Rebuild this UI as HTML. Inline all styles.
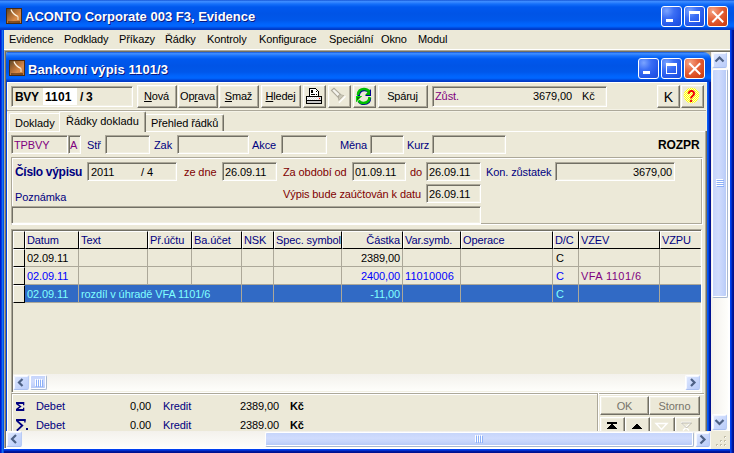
<!DOCTYPE html>
<html><head><meta charset="utf-8">
<style>
*{margin:0;padding:0;box-sizing:border-box}
html,body{width:734px;height:453px;overflow:hidden;background:#ECE9D8}
body{position:relative;font-family:"Liberation Sans",sans-serif;font-size:11px;color:#000}
.a{position:absolute}
.t{position:absolute;white-space:nowrap;line-height:13px}
.tb{position:absolute;background:linear-gradient(to bottom,#0842C8 0px,#3D8DFF 1px,#3A89FF 2px,#1570FA 4px,#0058EE 7px,#0054E6 14px,#0057EA 20px,#0064FC 24px,#0066FF 26px,#005CF4 27px,#0046D8 28px,#0036C0 30px)}
.ttl{color:#fff;font-weight:bold;font-size:13px;text-shadow:1px 1px 0 #0A1A80;letter-spacing:0}
.wb{position:absolute;width:21px;height:21px;border:1px solid #fff;border-radius:3px;background:radial-gradient(circle at 25% 20%,#7BA4FF 0%,#3C6FF5 35%,#2458EA 70%,#1A4BD8 100%)}
.wbc{background:radial-gradient(circle at 25% 20%,#F4A586 0%,#E6663E 40%,#D8481C 75%,#C23A12 100%)}
.sk{position:absolute;border-top:1px solid #ACA899;border-left:1px solid #ACA899;border-right:1px solid #fff;border-bottom:1px solid #fff;box-shadow:inset 1px 1px 0 #716F64, inset -1px -1px 0 #F1EFE2}
.bt{position:absolute;background:#ECE9D8;border-top:1px solid #fff;border-left:1px solid #fff;border-right:1px solid #716F64;border-bottom:1px solid #716F64;box-shadow:inset -1px -1px 0 #ACA899, inset 1px 1px 0 #F1EFE2}
.sbb{position:absolute;border:1px solid #fff;border-right-color:#B8CBF5;border-bottom-color:#A9BFF0;border-radius:2px;background:linear-gradient(135deg,#E2EAFE 0%,#CCDAFC 45%,#B9CCF9 100%);box-shadow:inset 1px 1px 0 #F4F7FF}
.thv{position:absolute;border:1px solid #fff;border-right-color:#A8B8D0;border-bottom-color:#A8B8D0;box-shadow:inset -1px -1px 0 #fff;border-radius:2px;background:linear-gradient(to right,#C6D5FB 0%,#D0DCFD 40%,#C4D4FB 70%,#B6C9F6 100%)}
.thh{position:absolute;border:1px solid #fff;border-right-color:#A8B8D0;border-bottom-color:#A8B8D0;box-shadow:inset -1px -1px 0 #fff;border-radius:2px;background:linear-gradient(to bottom,#C6D5FB 0%,#D0DCFD 40%,#C4D4FB 70%,#B2C6F5 100%)}
</style></head><body>
<svg width="0" height="0" style="position:absolute"><defs>
<linearGradient id="ig" x1="0" y1="0" x2="1" y2="1"><stop offset="0" stop-color="#5E4A2A"/><stop offset="0.35" stop-color="#A86A34"/><stop offset="0.65" stop-color="#D88A48"/><stop offset="1" stop-color="#C07838"/></linearGradient>
</defs></svg>

<div class="tb" style="left:0;top:0;width:734px;height:30px"></div>
<svg class="a" style="left:6px;top:8px" width="16" height="16">
<rect x="0" y="0" width="16" height="16" fill="#4A2A10"/>
<rect x="1" y="1" width="14" height="14" fill="url(#ig)"/>
<path d="M5 1.5 Q6.5 6 12 8.5" stroke="#FFF4E0" stroke-width="1.3" fill="none"/>
<path d="M12 8.5 L12 12" stroke="#F0E0C0" stroke-width="1.2"/>
<path d="M2 14 L14 14" stroke="#3A2008" stroke-width="1.5" opacity="0.7"/>
</svg>
<div class="t ttl" style="left:25px;top:10px">ACONTO Corporate 003 F3, Evidence</div>
<div class="wb" style="left:661px;top:6px"></div>
<div class="a" style="left:666px;top:19px;width:7px;height:3px;background:#fff;"></div>
<div class="wb" style="left:684px;top:6px"></div>
<div class="a" style="left:689px;top:11px;width:11px;height:11px;border:1px solid #fff;border-top-width:3px"></div>
<div class="wb wbc" style="left:707px;top:6px"></div>
<svg class="a" style="left:707px;top:6px" width="21" height="21"><path d="M6 6L15.5 15.5M15.5 6L6 15.5" stroke="#fff" stroke-width="2" stroke-linecap="square"/></svg>
<div class="a" style="left:0px;top:30px;width:4px;height:423px;background:linear-gradient(to right,#0018D0 0px,#0018D0 1px,#0040E0 1px,#0040E0 2px,#1A70F0 2px,#1A70F0 3px,#0050E8 3px);"></div>
<div class="a" style="left:730px;top:30px;width:4px;height:423px;background:linear-gradient(to right,#0040F0 0px,#0040F0 1px,#0030D0 1px,#0030D0 2px,#0018A0 2px,#0018A0 3px,#001090 3px);"></div>
<div class="a" style="left:4px;top:449px;width:726px;height:4px;background:linear-gradient(to bottom,#0040F0 0px,#0040F0 1px,#0030D0 1px,#0030D0 2px,#0018A0 2px,#0018A0 3px,#001090 3px);"></div>
<div class="t " style="left:9px;top:33px;color:#000;font-size:11px;letter-spacing:-0.1px">Evidence</div>
<div class="t " style="left:64px;top:33px;color:#000;font-size:11px;letter-spacing:-0.1px">Podklady</div>
<div class="t " style="left:119px;top:33px;color:#000;font-size:11px;letter-spacing:-0.1px">Příkazy</div>
<div class="t " style="left:165px;top:33px;color:#000;font-size:11px;letter-spacing:-0.1px">Řádky</div>
<div class="t " style="left:207px;top:33px;color:#000;font-size:11px;letter-spacing:-0.1px">Kontroly</div>
<div class="t " style="left:259px;top:33px;color:#000;font-size:11px;letter-spacing:-0.1px">Konfigurace</div>
<div class="t " style="left:329px;top:33px;color:#000;font-size:11px;letter-spacing:-0.1px">Speciální</div>
<div class="t " style="left:381px;top:33px;color:#000;font-size:11px;letter-spacing:-0.1px">Okno</div>
<div class="t " style="left:418px;top:33px;color:#000;font-size:11px;letter-spacing:-0.1px">Modul</div>
<div class="a" style="left:4px;top:49px;width:726px;height:1px;background:#fff;"></div>
<div class="a" style="left:4px;top:50px;width:726px;height:399px;background:#ACA899;"></div>
<div class="a" style="left:5px;top:51px;width:725px;height:398px;background:#716F64;"></div>
<div class="a" style="left:6px;top:52px;width:724px;height:397px;background:#ACA899;"></div>
<div class="tb" style="left:6px;top:52px;width:705px;height:30px;border-top-right-radius:8px 7px;border-top-left-radius:2px"></div>
<svg class="a" style="left:9px;top:60px" width="16" height="16">
<rect x="0" y="0" width="16" height="16" fill="#4A2A10"/>
<rect x="1" y="1" width="14" height="14" fill="url(#ig)"/>
<path d="M5 1.5 Q6.5 6 12 8.5" stroke="#FFF4E0" stroke-width="1.3" fill="none"/>
<path d="M12 8.5 L12 12" stroke="#F0E0C0" stroke-width="1.2"/>
<path d="M2 14 L14 14" stroke="#3A2008" stroke-width="1.5" opacity="0.7"/>
</svg>
<div class="t ttl" style="left:28px;top:63px;letter-spacing:0.1px">Bankovní výpis 1101/3</div>
<div class="wb" style="left:638px;top:58px"></div>
<div class="a" style="left:643px;top:71px;width:7px;height:3px;background:#fff;"></div>
<div class="wb" style="left:661px;top:58px"></div>
<div class="a" style="left:666px;top:63px;width:11px;height:11px;border:1px solid #fff;border-top-width:3px"></div>
<div class="wb wbc" style="left:684px;top:58px"></div>
<svg class="a" style="left:684px;top:58px" width="21" height="21"><path d="M6 6L15.5 15.5M15.5 6L6 15.5" stroke="#fff" stroke-width="2" stroke-linecap="square"/></svg>
<div class="a" style="left:6px;top:82px;width:1px;height:349px;background:#0040E0;"></div>
<div class="a" style="left:707px;top:82px;width:4px;height:349px;background:linear-gradient(to right,#0A5AF5 0px,#0A5AF5 1px,#0048E0 1px,#0048E0 2px,#0022B0 2px,#0022B0 3px,#001292 3px,#001292 4px);"></div>
<div class="a" style="left:7px;top:82px;width:700px;height:349px;background:#ECE9D8;"></div>
<div class="a" style="left:7px;top:82px;width:700px;height:1px;background:#fff;"></div>
<div class="a" style="left:7px;top:82px;width:1px;height:349px;background:#fff;"></div>
<div class="a" style="left:706px;top:83px;width:1px;height:48px;background:#F1EFE2;"></div>
<div class="sk" style="left:11px;top:86px;width:122px;height:21px;background:#ECE9D8"></div>
<div class="a" style="left:43px;top:88px;width:34px;height:17px;background:#fff;"></div>
<div class="t " style="left:15px;top:91px;color:#000;font-size:12px;font-weight:bold;letter-spacing:-0.3px">BVY</div>
<div class="t " style="left:45px;top:91px;color:#000;font-size:12px;font-weight:bold;letter-spacing:0.1px">1101</div>
<div class="t " style="left:80px;top:91px;color:#000;font-size:12px;font-weight:bold">/</div>
<div class="t " style="left:86px;top:91px;color:#000;font-size:12px;font-weight:bold">3</div>
<div class="bt" style="left:137px;top:85px;width:40px;height:23px"></div>
<div class="t" style="left:137px;width:40px;text-align:center;top:90px;letter-spacing:-0.2px;padding-right:1px"><u>N</u>ová</div>
<div class="bt" style="left:178px;top:85px;width:40px;height:23px"></div>
<div class="t" style="left:178px;width:40px;text-align:center;top:90px;letter-spacing:-0.2px;padding-right:1px">Op<u>r</u>ava</div>
<div class="bt" style="left:219px;top:85px;width:40px;height:23px"></div>
<div class="t" style="left:219px;width:40px;text-align:center;top:90px;letter-spacing:-0.2px;padding-right:1px"><u>S</u>maž</div>
<div class="bt" style="left:261px;top:85px;width:40px;height:23px"></div>
<div class="t" style="left:261px;width:40px;text-align:center;top:90px;letter-spacing:-0.2px;padding-right:1px"><u>H</u>ledej</div>
<div class="bt" style="left:303px;top:85px;width:23px;height:23px"></div>
<div class="bt" style="left:328px;top:85px;width:23px;height:23px"></div>
<div class="bt" style="left:353px;top:85px;width:23px;height:23px"></div>
<div class="bt" style="left:378px;top:85px;width:50px;height:23px"></div>
<div class="t" style="left:378px;width:50px;text-align:center;top:90px;letter-spacing:-0.2px;padding-right:1px">Spáruj</div>
<svg class="a" style="left:306px;top:88px" width="16" height="16" shape-rendering="crispEdges">
<path d="M3 0h7v1h1v1h1v1h1v5h-10z" fill="#000"/>
<path d="M4 1h6v1h1v1h1v5h-8z" fill="#fff"/>
<rect x="5" y="2" width="2" height="2" fill="#000"/><rect x="10" y="3" width="1" height="1" fill="#000"/>
<rect x="5" y="4" width="2" height="1" fill="#000"/><rect x="5" y="6" width="4" height="1" fill="#000"/><rect x="10" y="6" width="1" height="1" fill="#000"/>
<rect x="0" y="8" width="16" height="8" fill="#000"/>
<rect x="1" y="9" width="14" height="3" fill="#E0E0E0"/>
<path d="M1 9h1v1h-1zM3 9h1v1h-1zM5 9h1v1h-1zM7 9h1v1h-1zM9 9h1v1h-1zM11 9h1v1h-1zM2 10h1v1h-1zM4 10h1v1h-1zM6 10h1v1h-1zM8 10h1v1h-1zM10 10h1v1h-1zM12 10h1v1h-1zM1 11h1v1h-1zM3 11h1v1h-1zM5 11h1v1h-1zM7 11h1v1h-1zM9 11h1v1h-1zM11 11h1v1h-1z" fill="#fff"/>
<rect x="13" y="10" width="1" height="1" fill="#f00"/>
<rect x="1" y="13" width="14" height="2" fill="#C8C8C8"/>
</svg>
<svg class="a" style="left:328px;top:86px" width="22" height="20">
<path d="M3.5 4.5 L6 2.3 L12.3 8.2 L9.6 10.8 Z" fill="#F4F3EC" stroke="#ACA899" stroke-width="1.1"/>
<path d="M9.6 10.8 L12.3 8.2 L16.3 9.2 L10.6 15 Z" fill="#ACA899"/>
<path d="M11.5 9 L15.5 9.5 L10.5 14 Z" fill="#ECE9D8" opacity="0.5"/>
<path d="M17.5 10.3 L11 16.8" stroke="#fff" stroke-width="1.3"/>
</svg>
<svg class="a" style="left:354px;top:86px" width="20" height="20">
<path d="M4 9 C4 5 6.5 3 10 3 C12.5 3 14 4 15 5.5" fill="none" stroke="#000090" stroke-width="2.6" transform="translate(0.6,1)"/>
<path d="M4 9 C4 5 6.5 3 10 3 C12.5 3 14 4 15 5.5" fill="none" stroke="#00C000" stroke-width="2.6"/>
<path d="M17 3 L17 10 L11 10 Z" fill="#000090"/>
<path d="M16 3.2 L16 9 L11.2 9 Z" fill="#00B000"/>
<path d="M15.5 11 C15.5 15 13 17 9.5 17 C7 17 5.5 16 4.5 14.5" fill="none" stroke="#000090" stroke-width="2.6" transform="translate(0.4,0.8)"/>
<path d="M15.5 11 C15.5 15 13 17 9.5 17 C7 17 5.5 16 4.5 14.5" fill="none" stroke="#00C000" stroke-width="2.6"/>
<path d="M2 10 L8 10 L2 16 Z" fill="#008000"/>
<path d="M2 10 L8 10 L7 11 L3 11 L3 15 L2 16 Z" fill="#00E000"/>
</svg>
<div class="sk" style="left:432px;top:86px;width:175px;height:21px;background:#ECE9D8"></div>
<div class="t " style="left:435px;top:90px;color:#800080;font-size:11px;letter-spacing:-0.1px">Zůst.</div>
<div class="t " style="left:480px;width:92px;text-align:right;top:90px;color:#000;font-size:11px;letter-spacing:-0.1px">3679,00</div>
<div class="t " style="left:582px;top:90px;color:#000;font-size:11px;letter-spacing:-0.1px">Kč</div>
<div class="bt" style="left:657px;top:85px;width:23px;height:23px"></div>
<div class="t" style="left:657px;width:23px;text-align:center;top:90px;font-size:14px;line-height:15px;font-weight:normal;-webkit-text-stroke:0">K</div>
<div class="bt" style="left:681px;top:85px;width:23px;height:23px"></div>
<svg class="a" style="left:683px;top:87px" width="17" height="17">
<defs><pattern id="dith" width="2" height="2" patternUnits="userSpaceOnUse"><rect width="2" height="2" fill="#FFFFC0"/><rect width="1" height="1" fill="#FFFF00"/><rect x="1" y="1" width="1" height="1" fill="#FFFF00"/></pattern></defs>
<circle cx="8.5" cy="8.5" r="7.8" fill="url(#dith)"/>
<text x="8.5" y="15.5" text-anchor="middle" font-family="Liberation Sans" font-weight="bold" font-size="17" fill="#F00000" transform="translate(8.5,0) scale(0.85,1) translate(-8.5,0)">?</text>
</svg>
<div class="a" style="left:7px;top:109px;width:699px;height:1px;background:#F4F2E6;"></div>
<div class="a" style="left:7px;top:110px;width:699px;height:1px;background:#ACA899;"></div>
<div class="a" style="left:7px;top:111px;width:699px;height:1px;background:#F4F2E6;"></div>
<div class="a" style="left:7px;top:131px;width:699px;height:1px;background:#fff;"></div>
<div class="a" style="left:705px;top:131px;width:1px;height:300px;background:#ACA899;"></div>
<div class="a" style="left:706px;top:131px;width:1px;height:300px;background:#716F64;"></div>
<div class="a" style="left:9px;top:113px;width:50px;height:18px;border-top:1px solid #fff;border-left:1px solid #fff;border-radius:2px 0 0 0;background:#ECE9D8"></div>
<div class="t " style="left:15px;top:117px;color:#000;font-size:11px">Doklady</div>
<div class="a" style="left:59px;top:111px;width:87px;height:21px;border-top:1px solid #fff;border-left:1px solid #fff;border-right:1px solid #716F64;box-shadow:inset -1px 0 0 #ACA899;border-radius:2px 2px 0 0;background:#ECE9D8"></div>
<div class="t " style="left:66px;top:115px;color:#000;font-size:11px">Řádky dokladu</div>
<div class="a" style="left:146px;top:114px;width:78px;height:17px;border-top:1px solid #fff;border-right:1px solid #716F64;box-shadow:inset -1px 0 0 #ACA899;border-radius:0 2px 0 0;background:#ECE9D8"></div>
<div class="t " style="left:151px;top:117px;color:#000;font-size:11px;letter-spacing:-0.1px">Přehled řádků</div>
<div class="sk" style="left:11px;top:135px;width:57px;height:19px;background:#ECE9D8"></div>
<div class="t " style="left:14px;top:139px;color:#800080;font-size:11px;letter-spacing:-0.1px">TPBVY</div>
<div class="sk" style="left:68px;top:135px;width:13px;height:19px;background:#ECE9D8"></div>
<div class="t " style="left:70px;top:139px;color:#800080;font-size:11px;letter-spacing:-0.1px">A</div>
<div class="t " style="left:87px;top:139px;color:#000080;font-size:11px;letter-spacing:-0.1px">Stř</div>
<div class="sk" style="left:105px;top:135px;width:45px;height:19px;background:#ECE9D8"></div>
<div class="t " style="left:154px;top:139px;color:#000080;font-size:11px;letter-spacing:-0.1px">Zak</div>
<div class="sk" style="left:177px;top:135px;width:72px;height:19px;background:#ECE9D8"></div>
<div class="t " style="left:252px;top:139px;color:#000080;font-size:11px;letter-spacing:-0.1px">Akce</div>
<div class="sk" style="left:281px;top:135px;width:46px;height:19px;background:#ECE9D8"></div>
<div class="t " style="left:340px;top:139px;color:#000080;font-size:11px;letter-spacing:-0.1px">Měna</div>
<div class="sk" style="left:370px;top:135px;width:34px;height:19px;background:#ECE9D8"></div>
<div class="t " style="left:407px;top:139px;color:#000080;font-size:11px;letter-spacing:-0.1px">Kurz</div>
<div class="sk" style="left:432px;top:135px;width:74px;height:19px;background:#ECE9D8"></div>
<div class="t " style="left:658px;top:139px;color:#000;font-size:12px;font-weight:bold;letter-spacing:-0.1px">ROZPR</div>
<div class="a" style="left:11px;top:157px;width:692px;height:68px;border-top:1px solid #ACA899;border-left:1px solid #ACA899;border-right:1px solid #fff;border-bottom:1px solid #fff;box-shadow:inset 1px 1px 0 #fff, inset -1px -1px 0 #ACA899"></div>
<div class="t " style="left:15px;top:166px;color:#000080;font-size:12px;font-weight:bold;letter-spacing:-0.3px">Číslo výpisu</div>
<div class="sk" style="left:87px;top:162px;width:90px;height:19px;background:#ECE9D8"></div>
<div class="t " style="left:91px;top:166px;color:#000;font-size:11px;letter-spacing:-0.1px">2011</div>
<div class="t " style="left:141px;top:166px;color:#000;font-size:11px;letter-spacing:-0.1px">/ 4</div>
<div class="t " style="left:184px;top:166px;color:#800000;font-size:11px;letter-spacing:-0.1px">ze dne</div>
<div class="sk" style="left:222px;top:162px;width:55px;height:19px;background:#ECE9D8"></div>
<div class="t " style="left:225px;top:166px;color:#000;font-size:11px;letter-spacing:-0.1px">26.09.11</div>
<div class="t " style="left:283px;top:166px;color:#800000;font-size:11px;letter-spacing:-0.1px">Za období od</div>
<div class="sk" style="left:352px;top:162px;width:54px;height:19px;background:#ECE9D8"></div>
<div class="t " style="left:355px;top:166px;color:#000;font-size:11px;letter-spacing:-0.1px">01.09.11</div>
<div class="t " style="left:410px;top:166px;color:#800000;font-size:11px;letter-spacing:-0.1px">do</div>
<div class="sk" style="left:426px;top:162px;width:55px;height:19px;background:#ECE9D8"></div>
<div class="t " style="left:429px;top:166px;color:#000;font-size:11px;letter-spacing:-0.1px">26.09.11</div>
<div class="t " style="left:486px;top:166px;color:#000080;font-size:11px;letter-spacing:-0.1px">Kon. zůstatek</div>
<div class="sk" style="left:555px;top:162px;width:120px;height:19px;background:#ECE9D8"></div>
<div class="t " style="left:600px;width:72px;text-align:right;top:166px;color:#000;font-size:11px;letter-spacing:-0.1px">3679,00</div>
<div class="t " style="left:15px;top:191px;color:#000080;font-size:11px;letter-spacing:-0.1px">Poznámka</div>
<div class="t " style="left:283px;top:188px;color:#800000;font-size:11px;letter-spacing:-0.1px">Výpis bude zaúčtován k datu</div>
<div class="sk" style="left:426px;top:184px;width:55px;height:19px;background:#ECE9D8"></div>
<div class="t " style="left:429px;top:188px;color:#000;font-size:11px;letter-spacing:-0.1px">26.09.11</div>
<div class="sk" style="left:11px;top:206px;width:470px;height:18px;background:#ECE9D8"></div>
<div class="sk" style="left:11px;top:229px;width:691px;height:164px;background:#ECE9D8"></div>
<div class="a" style="left:13px;top:231px;width:12px;height:18px;background:#ECE9D8;border-top:1px solid #fff;border-left:1px solid #fff;border-right:1px solid #000;border-bottom:1px solid #000"></div>
<div class="a" style="left:25px;top:231px;width:54px;height:18px;background:#ECE9D8;border-top:1px solid #fff;border-left:1px solid #fff;border-right:1px solid #000;border-bottom:1px solid #000"></div>
<div class="t " style="left:27px;top:234px;color:#000080;font-size:11px;letter-spacing:-0.1px">Datum</div>
<div class="a" style="left:79px;top:231px;width:69px;height:18px;background:#ECE9D8;border-top:1px solid #fff;border-left:1px solid #fff;border-right:1px solid #000;border-bottom:1px solid #000"></div>
<div class="t " style="left:81px;top:234px;color:#000080;font-size:11px;letter-spacing:-0.1px">Text</div>
<div class="a" style="left:148px;top:231px;width:44px;height:18px;background:#ECE9D8;border-top:1px solid #fff;border-left:1px solid #fff;border-right:1px solid #000;border-bottom:1px solid #000"></div>
<div class="t " style="left:150px;top:234px;color:#000080;font-size:11px;letter-spacing:-0.1px">Př.účtu</div>
<div class="a" style="left:192px;top:231px;width:50px;height:18px;background:#ECE9D8;border-top:1px solid #fff;border-left:1px solid #fff;border-right:1px solid #000;border-bottom:1px solid #000"></div>
<div class="t " style="left:194px;top:234px;color:#000080;font-size:11px;letter-spacing:-0.1px">Ba.účet</div>
<div class="a" style="left:242px;top:231px;width:32px;height:18px;background:#ECE9D8;border-top:1px solid #fff;border-left:1px solid #fff;border-right:1px solid #000;border-bottom:1px solid #000"></div>
<div class="t " style="left:244px;top:234px;color:#000080;font-size:11px;letter-spacing:-0.1px">NSK</div>
<div class="a" style="left:274px;top:231px;width:68px;height:18px;background:#ECE9D8;border-top:1px solid #fff;border-left:1px solid #fff;border-right:1px solid #000;border-bottom:1px solid #000"></div>
<div class="t " style="left:276px;top:234px;color:#000080;font-size:11px;letter-spacing:-0.1px">Spec. symbol</div>
<div class="a" style="left:342px;top:231px;width:61px;height:18px;background:#ECE9D8;border-top:1px solid #fff;border-left:1px solid #fff;border-right:1px solid #000;border-bottom:1px solid #000"></div>
<div class="t " style="left:342px;width:58px;text-align:right;top:234px;color:#000080;font-size:11px;letter-spacing:-0.1px">Částka</div>
<div class="a" style="left:403px;top:231px;width:58px;height:18px;background:#ECE9D8;border-top:1px solid #fff;border-left:1px solid #fff;border-right:1px solid #000;border-bottom:1px solid #000"></div>
<div class="t " style="left:405px;top:234px;color:#000080;font-size:11px;letter-spacing:-0.1px">Var.symb.</div>
<div class="a" style="left:461px;top:231px;width:92px;height:18px;background:#ECE9D8;border-top:1px solid #fff;border-left:1px solid #fff;border-right:1px solid #000;border-bottom:1px solid #000"></div>
<div class="t " style="left:463px;top:234px;color:#000080;font-size:11px;letter-spacing:-0.1px">Operace</div>
<div class="a" style="left:553px;top:231px;width:26px;height:18px;background:#ECE9D8;border-top:1px solid #fff;border-left:1px solid #fff;border-right:1px solid #000;border-bottom:1px solid #000"></div>
<div class="t " style="left:555px;top:234px;color:#000080;font-size:11px;letter-spacing:-0.1px">D/C</div>
<div class="a" style="left:579px;top:231px;width:81px;height:18px;background:#ECE9D8;border-top:1px solid #fff;border-left:1px solid #fff;border-right:1px solid #000;border-bottom:1px solid #000"></div>
<div class="t " style="left:581px;top:234px;color:#000080;font-size:11px;letter-spacing:-0.1px">VZEV</div>
<div class="a" style="left:660px;top:231px;width:41px;height:18px;background:#ECE9D8;border-top:1px solid #fff;border-left:1px solid #fff;border-right:1px solid transparent;border-bottom:1px solid #000"></div>
<div class="t " style="left:662px;top:234px;color:#000080;font-size:11px;letter-spacing:-0.1px">VZPU</div>
<div class="a" style="left:13px;top:249px;width:12px;height:18px;background:#ECE9D8;border-top:1px solid #fff;border-left:1px solid #fff;border-right:1px solid #000;border-bottom:1px solid #000"></div>
<div class="a" style="left:13px;top:267px;width:12px;height:18px;background:#ECE9D8;border-top:1px solid #fff;border-left:1px solid #fff;border-right:1px solid #000;border-bottom:1px solid #000"></div>
<div class="a" style="left:13px;top:285px;width:12px;height:18px;background:#ECE9D8;border-top:1px solid #fff;border-left:1px solid #fff;border-right:1px solid #000;border-bottom:1px solid #000"></div>
<div class="a" style="left:25px;top:285px;width:676px;height:17px;background:#316AC5;"></div>
<div class="a" style="left:78px;top:249px;width:1px;height:54px;background:#ACA899;"></div>
<div class="a" style="left:147px;top:249px;width:1px;height:36px;background:#ACA899;"></div>
<div class="a" style="left:191px;top:249px;width:1px;height:36px;background:#ACA899;"></div>
<div class="a" style="left:241px;top:249px;width:1px;height:54px;background:#ACA899;"></div>
<div class="a" style="left:273px;top:249px;width:1px;height:54px;background:#ACA899;"></div>
<div class="a" style="left:341px;top:249px;width:1px;height:54px;background:#ACA899;"></div>
<div class="a" style="left:402px;top:249px;width:1px;height:54px;background:#ACA899;"></div>
<div class="a" style="left:460px;top:249px;width:1px;height:54px;background:#ACA899;"></div>
<div class="a" style="left:552px;top:249px;width:1px;height:54px;background:#ACA899;"></div>
<div class="a" style="left:578px;top:249px;width:1px;height:54px;background:#ACA899;"></div>
<div class="a" style="left:659px;top:249px;width:1px;height:54px;background:#ACA899;"></div>
<div class="a" style="left:25px;top:266px;width:676px;height:1px;background:#ACA899;"></div>
<div class="a" style="left:25px;top:284px;width:676px;height:1px;background:#ACA899;"></div>
<div class="a" style="left:25px;top:302px;width:676px;height:1px;background:#ACA899;"></div>
<div class="t " style="left:27px;top:252px;color:#000;font-size:11px;letter-spacing:-0.1px">02.09.11</div>
<div class="t " style="left:300px;width:100px;text-align:right;top:252px;color:#000;font-size:11px;letter-spacing:-0.1px">2389,00</div>
<div class="t " style="left:556px;top:252px;color:#000;font-size:11px;letter-spacing:-0.1px">C</div>
<div class="t " style="left:27px;top:270px;color:#0000FF;font-size:11px;letter-spacing:-0.1px">02.09.11</div>
<div class="t " style="left:300px;width:100px;text-align:right;top:270px;color:#0000FF;font-size:11px;letter-spacing:-0.1px">2400,00</div>
<div class="t " style="left:405px;top:270px;color:#0000FF;font-size:11px;letter-spacing:0.1px">11010006</div>
<div class="t " style="left:556px;top:270px;color:#0000FF;font-size:11px;letter-spacing:-0.1px">C</div>
<div class="t " style="left:581px;top:270px;color:#800080;font-size:11px;letter-spacing:0.45px">VFA 1101/6</div>
<div class="t " style="left:27px;top:288px;color:#80FFFF;font-size:11px;letter-spacing:-0.1px">02.09.11</div>
<div class="t " style="left:81px;top:288px;color:#80FFFF;font-size:11px;letter-spacing:-0.1px">rozdíl v úhradě VFA 1101/6</div>
<div class="t " style="left:300px;width:100px;text-align:right;top:288px;color:#80FFFF;font-size:11px;letter-spacing:-0.1px">-11,00</div>
<div class="t " style="left:556px;top:288px;color:#80FFFF;font-size:11px;letter-spacing:-0.1px">C</div>
<div class="a" style="left:13px;top:374px;width:688px;height:17px;background:linear-gradient(to bottom,#F3F1EC,#FEFEFB);"></div>
<div class="sbb" style="left:13px;top:375px;width:16px;height:15px"></div>
<svg class="a" style="left:13px;top:375px" width="16" height="15"><path d="M9.5 4L6 7.5L9.5 11" stroke="#4D6185" stroke-width="2.2" fill="none"/></svg>
<div class="thh" style="left:30px;top:375px;width:17px;height:15px"></div>
<svg class="a" style="left:30px;top:375px" width="17" height="15" shape-rendering="crispEdges"><path d="M5 4h1v7h-1zM7 4h1v7h-1zM9 4h1v7h-1zM11 4h1v7h-1z" fill="#fff"/><path d="M6 5h1v7h-1zM8 5h1v7h-1zM10 5h1v7h-1zM12 5h1v7h-1z" fill="#8CB0F8"/></svg>
<div class="sbb" style="left:685px;top:375px;width:15px;height:15px"></div>
<svg class="a" style="left:685px;top:375px" width="15" height="15"><path d="M6 4L9.5 7.5L6 11" stroke="#4D6185" stroke-width="2.2" fill="none"/></svg>
<div class="a" style="left:11px;top:393px;width:693px;height:1px;background:#ACA899;"></div>
<div class="a" style="left:11px;top:393px;width:1px;height:38px;background:#ACA899;"></div>
<div class="a" style="left:12px;top:394px;width:692px;height:1px;background:#fff;"></div>
<div class="a" style="left:12px;top:394px;width:1px;height:37px;background:#fff;"></div>
<div class="a" style="left:597px;top:393px;width:1px;height:38px;background:#ACA899;"></div>
<div class="a" style="left:598px;top:393px;width:1px;height:38px;background:#fff;"></div>
<div class="t " style="left:36px;top:400px;color:#000080;font-size:11px;letter-spacing:-0.1px">Debet</div>
<div class="t " style="left:100px;width:51px;text-align:right;top:400px;color:#000;font-size:11px;letter-spacing:-0.1px">0,00</div>
<div class="t " style="left:163px;top:400px;color:#000080;font-size:11px;letter-spacing:-0.1px">Kredit</div>
<div class="t " style="left:220px;width:59px;text-align:right;top:400px;color:#000;font-size:11px;letter-spacing:-0.1px">2389,00</div>
<div class="t " style="left:290px;top:400px;color:#000;font-size:11px;font-weight:bold;letter-spacing:-0.1px">Kč</div>
<div class="t " style="left:36px;top:419px;color:#000080;font-size:11px;letter-spacing:-0.1px">Debet</div>
<div class="t " style="left:100px;width:51px;text-align:right;top:419px;color:#000;font-size:11px;letter-spacing:-0.1px">0.00</div>
<div class="t " style="left:163px;top:419px;color:#000080;font-size:11px;letter-spacing:-0.1px">Kredit</div>
<div class="t " style="left:220px;width:59px;text-align:right;top:419px;color:#000;font-size:11px;letter-spacing:-0.1px">2389.00</div>
<div class="t " style="left:290px;top:419px;color:#000;font-size:11px;font-weight:bold;letter-spacing:-0.1px">Kč</div>
<svg class="a" style="left:15px;top:401px" width="11" height="11"><rect x="1" y="1" width="8" height="2" fill="#000080"/><rect x="8" y="1" width="1.3" height="3.3" fill="#000080"/><rect x="1" y="8" width="8" height="2" fill="#000080"/><rect x="8" y="6.7" width="1.3" height="3.3" fill="#000080"/><path d="M1.6 2.6L5.4 5.5L1.6 8.4" stroke="#000080" stroke-width="1.5" fill="none"/></svg>
<svg class="a" style="left:15px;top:418px" width="14" height="13"><rect x="1" y="1" width="9.5" height="2" fill="#000080"/><rect x="9.2" y="1" width="1.4" height="3.5" fill="#000080"/><path d="M1.8 2.6L7.2 7.6L1.8 12.6" stroke="#000080" stroke-width="1.9" fill="none"/><rect x="11" y="10" width="2" height="2" fill="#000080"/></svg>
<div class="bt" style="left:600px;top:396px;width:49px;height:19px"></div>
<div class="bt" style="left:649px;top:396px;width:51px;height:19px"></div>
<div class="t " style="left:600px;width:49px;text-align:right;top:400px;color:#77746A;font-size:11px;letter-spacing:-0.1px;text-align:center">OK</div>
<div class="t " style="left:649px;width:51px;text-align:right;top:400px;color:#77746A;font-size:11px;letter-spacing:-0.1px;text-align:center">Storno</div>
<div class="bt" style="left:600px;top:417px;width:25px;height:24px"></div>
<div class="bt" style="left:625px;top:417px;width:25px;height:24px"></div>
<div class="bt" style="left:650px;top:417px;width:25px;height:24px"></div>
<div class="bt" style="left:675px;top:417px;width:25px;height:24px"></div>
<svg class="a" style="left:598px;top:412px" width="104" height="19" shape-rendering="crispEdges"><rect x="9" y="10" width="10" height="2" fill="#000"/><path d="M14 11.5 L19.5 17 L8.5 17 Z" fill="#000"/><path d="M38.5 11.5 L44 17 L33 17 Z" fill="#000"/><path d="M58 11.5 L69 11.5 L63.5 17.5 Z" fill="none" stroke="#fff" stroke-width="1.5" shape-rendering="auto"/><path d="M83 10.5h10M83 10.5L88 15.5L93 10.5M85 18.5L88 15.5L91 18.5" stroke="#fff" stroke-width="1.3" fill="none" shape-rendering="auto"/><path d="M83 10.5h10M83 10.5L88 15.5L93 10.5" stroke="#ACA899" stroke-width="0.8" fill="none" shape-rendering="auto" transform="translate(0.5,0.5)"/></svg>
<div class="a" style="left:711px;top:52px;width:17px;height:379px;background:linear-gradient(to right,#F3F1EC,#FEFEFB);"></div>
<div class="a" style="left:728px;top:52px;width:2px;height:397px;background:#fff;"></div>
<div class="sbb" style="left:712px;top:52px;width:15px;height:16px"></div>
<svg class="a" style="left:712px;top:52px" width="15" height="16"><path d="M3.5 9.5L7.5 5.5L11.5 9.5" stroke="#4D6185" stroke-width="2.2" fill="none"/></svg>
<div class="thv" style="left:712px;top:69px;width:16px;height:229px"></div>
<svg class="a" style="left:715px;top:178px" width="10" height="10" shape-rendering="crispEdges"><path d="M1 1h7v1h-7zM1 3h7v1h-7zM1 5h7v1h-7zM1 7h7v1h-7z" fill="#fff"/><path d="M2 2h7v1h-7zM2 4h7v1h-7zM2 6h7v1h-7zM2 8h7v1h-7z" fill="#8CB0F8"/></svg>
<div class="sbb" style="left:712px;top:414px;width:15px;height:16px"></div>
<svg class="a" style="left:712px;top:414px" width="15" height="16"><path d="M3.5 6L7.5 10L11.5 6" stroke="#4D6185" stroke-width="2.2" fill="none"/></svg>
<div class="a" style="left:6px;top:431px;width:705px;height:17px;background:linear-gradient(to bottom,#F3F1EC,#FEFEFB);"></div>
<div class="a" style="left:4px;top:448px;width:726px;height:1px;background:#fff;"></div>
<div class="sbb" style="left:6px;top:431px;width:16px;height:16px"></div>
<svg class="a" style="left:6px;top:431px" width="16" height="16"><path d="M10 4L6 8L10 12" stroke="#4D6185" stroke-width="2.2" fill="none"/></svg>
<div class="thh" style="left:265px;top:432px;width:429px;height:15px"></div>
<svg class="a" style="left:473px;top:434px" width="12" height="10" shape-rendering="crispEdges"><path d="M2 1h1v7h-1zM4 1h1v7h-1zM6 1h1v7h-1zM8 1h1v7h-1z" fill="#fff"/><path d="M3 2h1v7h-1zM5 2h1v7h-1zM7 2h1v7h-1zM9 2h1v7h-1z" fill="#8CB0F8"/></svg>
<div class="sbb" style="left:695px;top:432px;width:15px;height:15px"></div>
<svg class="a" style="left:695px;top:432px" width="15" height="15"><path d="M5.5 3.5L9.5 7.5L5.5 11.5" stroke="#4D6185" stroke-width="2.2" fill="none"/></svg>
<div class="a" style="left:711px;top:431px;width:19px;height:18px;background:#ECE9D8;"></div>
<svg class="a" style="left:711px;top:432px" width="19" height="17" shape-rendering="crispEdges"><path d="M13 4h2v2h-2zM9 8h2v2h-2zM13 8h2v2h-2zM5 12h2v2h-2zM9 12h2v2h-2zM13 12h2v2h-2z" fill="#C3BFAA"/><path d="M14 5h1v1h-1zM10 9h1v1h-1zM14 9h1v1h-1zM6 13h1v1h-1zM10 13h1v1h-1zM14 13h1v1h-1z" fill="#fff"/></svg>
</body></html>
